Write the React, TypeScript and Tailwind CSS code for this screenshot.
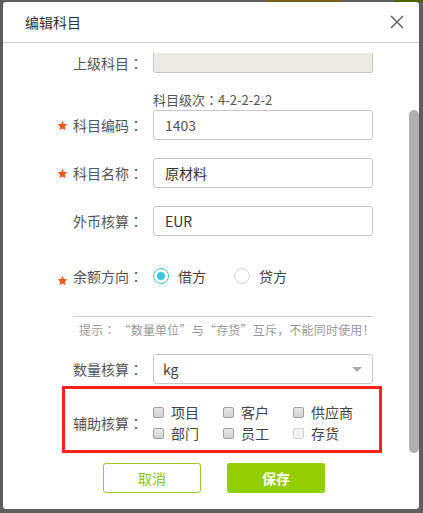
import React from 'react';

const font = { fontFamily: '"Noto Sans CJK SC", "Noto Sans", sans-serif' };
const colonFont = { fontFamily: '"Noto Sans CJK TC", "Noto Sans CJK SC", sans-serif' };

const Star = () => (
    <svg width="11" height="11" viewBox="0 0 24 24" className="mr-[5px] shrink-0">
        <path d="M12 1.5l3.1 7.2 7.8.7-5.9 5.2 1.8 7.7L12 18.3l-6.8 4 1.8-7.7L1.1 9.4l7.8-.7z" fill="#f05a1a" />
    </svg>
);

const Colon = () => <span style={colonFont}>：</span>;

const Label = ({ text, required, width = 'w-[150px]', starDown = false }: { text: string; required?: boolean; width?: string; starDown?: boolean }) => (
    <div className={`${width} shrink-0 flex items-center justify-end pr-[10px] text-[14px] text-[#555]`}>
        {required && <span className={starDown ? 'mt-[9px]' : ''}><Star /></span>}
        <span>
            {text}
            <Colon />
        </span>
    </div>
);

const Input = ({ value, disabled, dark }: { value?: string; disabled?: boolean; dark?: boolean }) => (
    <div
        className={`w-[220px] h-[30px] rounded-[3px] border border-[#c8c8c8] flex items-center pl-[11px] text-[14px] ${
            disabled ? 'bg-[#ebebe4]' : 'bg-white'
        } ${dark ? 'text-[#333]' : 'text-[#555]'}`}
    >
        {value}
    </div>
);

const Checkbox = ({ label, disabled }: { label: string; disabled?: boolean }) => (
    <div className="flex items-center h-[21px] w-[70px]">
        <span
            className={`w-[11px] h-[11px] rounded-[2px] border ${
                disabled ? 'border-[#d4d4d4] bg-[#f2f2f2]' : 'border-[#a0a0a0] bg-gradient-to-b from-[#e8e8e8] to-[#d2d2d2]'
            }`}
        />
        <span className="ml-[7px] text-[14px] text-[#444]">{label}</span>
    </div>
);

export default function App() {
    return (
        <div className="w-[423px] h-[513px] bg-[#5e5e5e] overflow-hidden" style={font}>
            <div className="flex h-[2px]">
                <div className="w-[267px]" />
                <div className="w-[74px] bg-[#7a5c10]" />
                <div className="w-[53px]" />
                <div className="flex-1 bg-[#4b6400]" />
            </div>
            <div className="ml-[3px] w-[416px] h-[507px] bg-white rounded-[3px] flex flex-col overflow-hidden">
                <div className="h-[41px] shrink-0 border-b border-[#d0d0d0] flex items-center justify-between pl-[22px] pr-[15px]">
                    <span className="text-[14px] text-[#333]">编辑科目</span>
                    <svg width="14" height="14" viewBox="0 0 14 14">
                        <path d="M1 1L13 13M13 1L1 13" stroke="#666" strokeWidth="1.5" />
                    </svg>
                </div>
                <div className="flex-1 flex pt-[10px] min-h-0">
                    <div className="flex-1">
                        {/* first row is scrolled half out of view */}
                        <div className="flex items-center h-[20px]">
                            <Label text="上级科目" />
                            <div className="w-[220px] h-[20px] rounded-b-[3px] border border-t-0 border-[#c8c8c8] bg-[#ebebe4]" />
                        </div>
                        <div className="mt-[18px] ml-[150px] h-[18px] leading-[18px] text-[13px] text-[#555]">
                            科目级次<Colon />4-2-2-2-2
                        </div>
                        <div className="mt-[1px] flex items-center h-[30px]">
                            <Label text="科目编码" required />
                            <Input value="1403" />
                        </div>
                        <div className="mt-[18px] flex items-center h-[30px]">
                            <Label text="科目名称" required />
                            <Input value="原材料" dark />
                        </div>
                        <div className="mt-[18px] flex items-center h-[30px]">
                            <Label text="外币核算" />
                            <Input value="EUR" dark />
                        </div>
                        <div className="mt-[25px] flex items-center h-[30px]">
                            <Label text="余额方向" required starDown />
                            <div className="flex items-center">
                                <span className="w-[16px] h-[16px] rounded-full border border-[#3ebfd8] flex items-center justify-center">
                                    <span className="w-[8px] h-[8px] rounded-full bg-[#3ec3dc]" />
                                </span>
                                <span className="ml-[9px] text-[14px] text-[#444]">借方</span>
                                <span className="ml-[28px] w-[16px] h-[16px] rounded-full border border-[#d8d8d8]" />
                                <span className="ml-[9px] text-[14px] text-[#444]">贷方</span>
                            </div>
                        </div>
                        <div className="mt-[25px] ml-[70px] w-[300px] h-px bg-[#cfcfcf]" />
                        <div className="mt-[4px] ml-[76px] h-[18px] leading-[18px] text-[12px] text-[#999] tracking-[0.2px]">
                            提示<Colon /> <span style={colonFont}>“</span>数量单位<span style={colonFont}>”</span>与
                            <span style={colonFont}>“</span>存货<span style={colonFont}>”</span>互斥，不能同时使用！
                        </div>
                        <div className="mt-[15px] flex items-center h-[30px]">
                            <Label text="数量核算" />
                            <div className="w-[220px] h-[30px] rounded-[3px] border border-[#c8c8c8] flex items-center justify-between pl-[9px] pr-[10px] text-[14px] text-[#444]">
                                <span>kg</span>
                                <span className="w-0 h-0 border-l-[5px] border-r-[5px] border-t-[5px] border-l-transparent border-r-transparent border-t-[#aaa]" />
                            </div>
                        </div>
                        <div className="mt-[2px] ml-[59px] w-[320px] h-[67px] border-[3px] border-[#ff2418] flex items-center pt-[7px]">
                            <Label text="辅助核算" width="w-[88px]" />
                            <div className="grid grid-cols-3">
                                <Checkbox label="项目" />
                                <Checkbox label="客户" />
                                <Checkbox label="供应商" />
                                <Checkbox label="部门" />
                                <Checkbox label="员工" />
                                <Checkbox label="存货" disabled />
                            </div>
                        </div>
                        <div className="mt-[10px] ml-[100px] flex gap-[26px]">
                            <button className="w-[98px] h-[30px] rounded-[3px] border border-[#9acb2a] text-[14px] text-[#8cc400] bg-white">取消</button>
                            <button className="w-[98px] h-[30px] rounded-[3px] bg-[#93ce00] text-[14px] font-bold text-white">保存</button>
                        </div>
                    </div>
                    <div className="w-[10px] shrink-0">
                        <div className="mt-[57px] h-[343px] rounded-full bg-[#b0b0b0]" />
                    </div>
                </div>
            </div>
        </div>
    );
}
